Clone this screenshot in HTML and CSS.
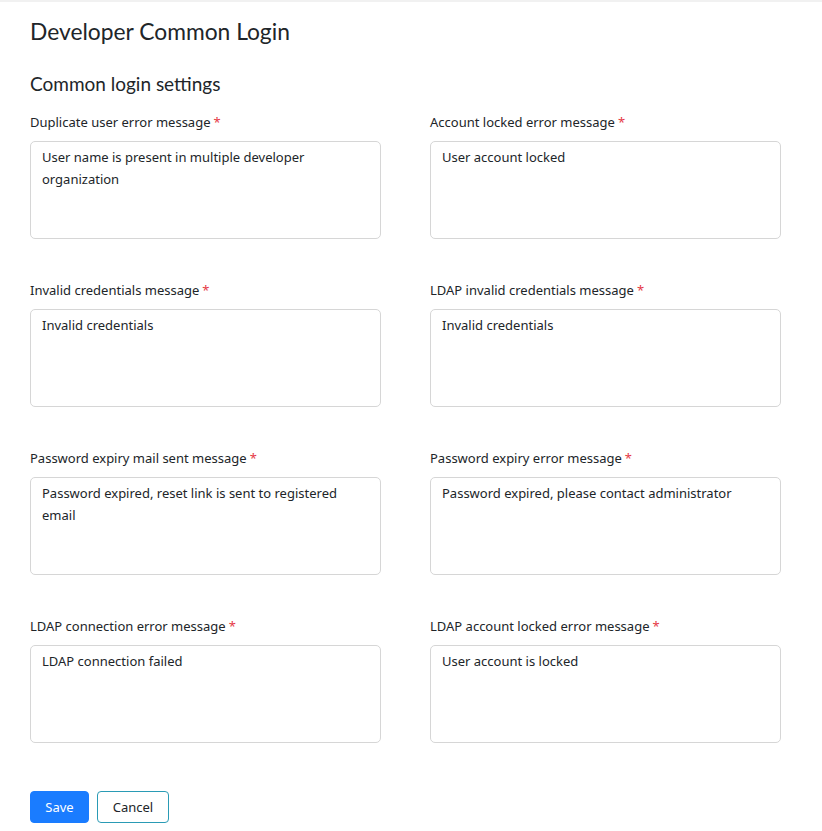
FILE: index.html
```html
<!DOCTYPE html>
<html>
<head>
<meta charset="utf-8">
<link rel="stylesheet" href="styles.css">
</head>
<body>
<div class="page">
  <h1 class="title">Developer Common Login</h1>
  <h2 class="subtitle">Common login settings</h2>
  <form class="grid">
    <div class="field">
      <label class="label">Duplicate user error message<span class="req">*</span></label>
      <textarea class="input">User name is present in multiple developer organization</textarea>
    </div>
    <div class="field">
      <label class="label">Account locked error message<span class="req">*</span></label>
      <textarea class="input">User account locked</textarea>
    </div>
    <div class="field">
      <label class="label">Invalid credentials message<span class="req">*</span></label>
      <textarea class="input">Invalid credentials</textarea>
    </div>
    <div class="field">
      <label class="label">LDAP invalid credentials message<span class="req">*</span></label>
      <textarea class="input">Invalid credentials</textarea>
    </div>
    <div class="field">
      <label class="label">Password expiry mail sent message<span class="req">*</span></label>
      <textarea class="input">Password expired, reset link is sent to registered email</textarea>
    </div>
    <div class="field">
      <label class="label">Password expiry error message<span class="req">*</span></label>
      <textarea class="input">Password expired, please contact administrator</textarea>
    </div>
    <div class="field">
      <label class="label">LDAP connection error message<span class="req">*</span></label>
      <textarea class="input">LDAP connection failed</textarea>
    </div>
    <div class="field">
      <label class="label">LDAP account locked error message<span class="req">*</span></label>
      <textarea class="input">User account is locked</textarea>
    </div>
  </form>
  <div class="actions">
    <button class="btn btn-primary" type="button">Save</button>
    <button class="btn btn-outline" type="button">Cancel</button>
  </div>
</div>
</body>
</html>
```
FILE: styles.css
```css
html, body {
  margin: 0;
  padding: 0;
  background: #fff;
}
body {
  border-top: 2px solid #f1f1f1;
  font-family: "Noto Sans", "Open Sans", sans-serif;
  color: #212529;
}
.page {
  padding: 15px 30px 0 30px;
}
.title {
  font-family: Lato, sans-serif;
  font-weight: 400;
  font-size: 22.8px;
  line-height: 28px;
  margin: 0 0 27px 0;
  color: #212529;
}
.subtitle {
  font-family: Lato, sans-serif;
  font-weight: 400;
  font-size: 19px;
  line-height: 24px;
  margin: 0 0 17px 0;
  color: #212529;
}
.grid {
  display: grid;
  grid-template-columns: 351px 351px;
  column-gap: 49px;
  row-gap: 42px;
}
.field {
  display: flex;
  flex-direction: column;
}
.label {
  font-size: 13px;
  line-height: 18px;
  margin-bottom: 10px;
  color: #212529;
}
.req {
  color: #e53946;
  margin-left: 3px;
}
.input {
  box-sizing: border-box;
  width: 351px;
  height: 98px;
  border: 1px solid #d6d6d6;
  border-radius: 5px;
  padding: 4px 11px;
  font-family: "Noto Sans", "Open Sans", sans-serif;
  font-size: 13px;
  line-height: 22px;
  color: #212529;
  resize: none;
  background: #fff;
  outline: none;
}
.actions {
  display: flex;
  gap: 8px;
  margin-top: 48px;
}
.btn {
  box-sizing: border-box;
  height: 32px;
  border-radius: 4px;
  font-family: "Noto Sans", "Open Sans", sans-serif;
  font-size: 13px;
  padding: 0 14px;
  cursor: pointer;
}
.btn-primary {
  width: 59px;
  background: #1a7cff;
  border: 1px solid #1a7cff;
  color: #fff;
}
.btn-outline {
  width: 72px;
  background: #fff;
  border: 1px solid #2a9bb5;
  color: #212529;
}
```
